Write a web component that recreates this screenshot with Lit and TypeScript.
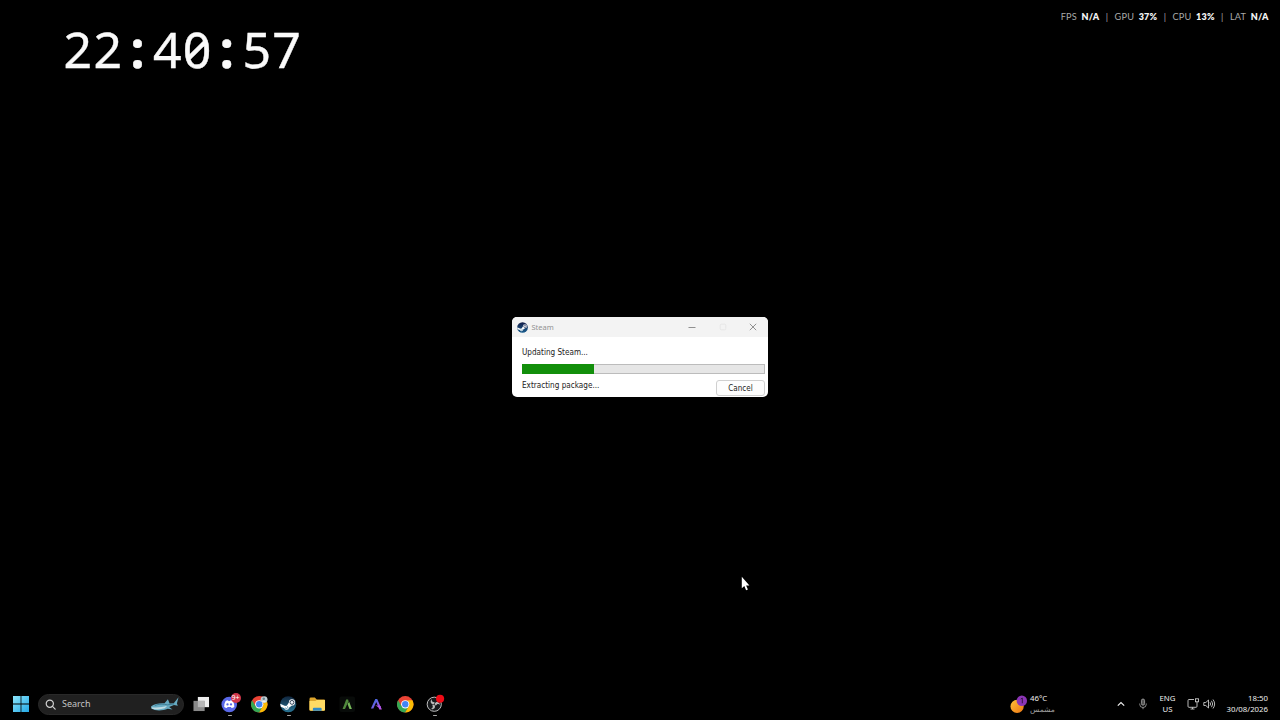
import { LitElement, html, css, svg } from "lit";
import { customElement } from "lit/decorators.js";

const steamMark = (id: string, dark: string, light: string) => html`<svg class="steam" viewBox="0 0 16 16">
  <defs><linearGradient id=${id} x1="0" y1="0" x2="0" y2="1"><stop offset="0" stop-color=${dark}/><stop offset="1" stop-color=${light}/></linearGradient></defs>
  <circle cx="8" cy="8" r="7.8" fill="url(#${id})"/>
  <path d="M.2 7.6 5 9.7c.6-.4 1-.4 1.6-.3l2-3v-.2a3 3 0 1 1 3 3l-2.9 2.1a2.3 2.3 0 0 1-4.5.5L.8 10.4Z" fill="#fff"/>
  <circle cx="11.6" cy="6.2" r="1.9" fill="#eef3f8" stroke=${dark} stroke-width=".8"/>
  <path d="m4.8 11.5 1.4.6a1.2 1.2 0 0 0 .8-2.2" fill="none" stroke=${light} stroke-width=".6"/>
</svg>`;

const chromeShape = svg`
  <circle cx="8" cy="8" r="8" fill="#ea4335"/>
  <path d="M1.07 4A8 8 0 0 0 8 16l3.5-6H8L4.5 10Z" fill="#34a853"/>
  <path d="M14.93 4A8 8 0 0 1 8 16l3.5-6A4 4 0 0 0 8 4Z" fill="#fbbc05"/>
  <circle cx="8" cy="8" r="4" fill="#fff"/><circle cx="8" cy="8" r="3.1" fill="#4285f4"/>`;

@customElement("update-window")
class UpdateWindow extends LitElement {
  static styles = css`
    :host { display: flex; flex-direction: column; box-sizing: border-box; width: 256px; height: 80px; border-radius: 5px; overflow: hidden; background: #fff; color: #222; font: 8.1px/12px "DejaVu Sans Condensed", "DejaVu Sans", sans-serif; }
    .title { display: flex; align-items: center; height: 20px; padding: 0 10px 0 5px; background: #f3f3f3; color: #929292; font: 7.5px/12px "Noto Sans", sans-serif; }
    .steam { width: 11px; height: 11px; margin-right: 3.5px; }
    .name { flex: 1; }
    .controls { display: flex; gap: 20.5px; }
    .controls svg { width: 10px; height: 10px; fill: none; stroke: #858585; stroke-width: .9; }
    .controls .off { stroke: #e5e5e5; }
    .body { display: flex; flex-direction: column; padding: 9px 3px 1px 10px; flex: 1; }
    .track { box-sizing: border-box; height: 10px; margin-top: 6px; border: 1px solid #bcbcbc; background: #e6e6e6; width: 243px; display: flex; }
    .fill { background: #128f0b; margin: -1px 0 -1px -1px; }
    .row { display: flex; justify-content: space-between; }
    .row .status { padding-top: 5px; }
    button { box-sizing: border-box; width: 49px; height: 16px; margin-top: 6px; padding: 1px 0 0; border: 1px solid #d0d0d0; border-radius: 3px; background: #fdfdfd; color: #222; font: 8px/13px "DejaVu Sans Condensed", "DejaVu Sans", sans-serif; }
  `;
  progress = 30;
  render() {
    return html`
      <div class="title">${steamMark("t", "#141d48", "#1b6091")}<span class="name">Steam</span>
        <div class="controls">
          <svg viewBox="0 0 10 10"><path d="M1.5 5.5h7"/></svg>
          <svg class="off" viewBox="0 0 10 10"><rect x="2.2" y="2.2" width="5.6" height="5.6" rx="1"/></svg>
          <svg viewBox="0 0 10 10"><path d="m1.8 1.8 6.4 6.4m0-6.4L1.8 8.2"/></svg>
        </div>
      </div>
      <div class="body">
        <span>Updating Steam...</span>
        <div class="track"><div class="fill" style="width:${this.progress}%"></div></div>
        <div class="row"><span class="status">Extracting package...</span><button>Cancel</button></div>
      </div>`;
  }
}

@customElement("task-bar")
class TaskBar extends LitElement {
  static styles = css`
    :host { display: flex; align-items: center; height: 32px; box-sizing: border-box; padding: 0 12px 0 13px; color: #eee; font: 8.5px/11px "Noto Sans", sans-serif; }
    svg { display: block; overflow: visible; }
    .start { width: 16px; height: 16px; }
    .search { display: flex; align-items: center; box-sizing: border-box; width: 146px; height: 21px; border-radius: 11px; margin: 0 9px 0 9px; padding: 0 4px 0 6px; background: #202020; border: 1px solid #292929; color: #c4c4c4; font: 9px/14px "Noto Sans", sans-serif; }
    .search .glass { width: 11px; height: 11px; margin-right: 6px; }
    .search span { flex: 1; }
    .search .shark { width: 28px; height: 14px; }
    .apps { display: flex; }
    .app { position: relative; display: flex; align-items: center; justify-content: center; width: 29.3px; height: 32px; }
    .app svg { width: 16.5px; height: 16.5px; }
    .app.tasks { width: 16px; margin-right: 6px; }
    .app.on::after { content: ""; position: absolute; bottom: 4px; left: 13px; width: 4px; height: 1.5px; border-radius: 1px; background: #a5a5a5; }
    .badge { position: absolute; left: 15.5px; top: 5px; width: 10px; height: 10px; border-radius: 50%; background: #d2374b; color: #fff; font-size: 7px; line-height: 10px; text-align: center; }
    .space { flex: 1; }
    .weather { display: flex; align-items: center; width: 107.5px; }
    .weather svg { width: 18px; height: 19px; margin-right: 2.5px; }
    .temps { display: flex; flex-direction: column; font-size: 7.8px; }
    .temps .ar { color: #a0a0a0; font-family: "DejaVu Sans", sans-serif; font-size: 7.6px; }
    .tray { display: flex; align-items: center; }
    .up { width: 8px; height: 8px; }
    .mic { width: 8px; height: 12px; margin-left: 14px; }
    .lang { margin-left: 12.5px; text-align: center; font-size: 7.8px; width: 16px; }
    .net { width: 12px; height: 12px; margin-left: 11px; }
    .vol { width: 12px; height: 12px; margin-left: 4px; }
    .clock { margin-left: 11.5px; text-align: right; width: 42px; font-size: 7.8px; white-space: nowrap; }
  `;
  render() {
    return html`
      <svg class="start" viewBox="0 0 16 16"><defs><linearGradient id="w" x2="1" y2="1"><stop stop-color="#8ce5fb"/><stop offset="1" stop-color="#24a9e6"/></linearGradient></defs><path fill="url(#w)" d="M0 0h7.6v7.6H0ZM8.4 0H16v7.6H8.4ZM0 8.4h7.6V16H0ZM8.4 8.4H16V16H8.4Z"/></svg>
      <div class="search">
        <svg class="glass" viewBox="0 0 11 11" fill="none" stroke="#d0d0d0" stroke-width="1.2"><circle cx="4.8" cy="4.7" r="3.6"/><path d="m7.5 7.4 2.7 2.7" stroke-linecap="round"/></svg>
        <span>Search</span>
        <svg class="shark" viewBox="0 0 29 14"><path d="M0 9.5C3 6.8 8 6 14 6.2L17.5 2l1.8 4.4 4.3-.3L28.5 0l-1.7 6.4 1 2.5-4-.8-5 2 3.5 2.5-5-.7c-5 2.3-13 2.5-17-.2Z" fill="#67abc2"/><path d="M.8 10.4c6 .8 11-.2 16-1.5l-2.5 2.6c-5 1.6-10 1.5-13.5.2Z" fill="#c1dce3"/><path d="M4 8.5c4-1.7 9-1.7 13-.6l7-1" fill="none" stroke="#316f87" stroke-width=".8"/></svg>
      </div>
      <div class="apps">
        <div class="app tasks"><svg viewBox="0 0 17 17"><rect x="5" y="1" width="11.5" height="10.5" fill="#eee"/><rect x=".5" y="5" width="11.5" height="10.5" fill="#898989"/><path d="M5 5h7v6.5H5Z" fill="#b6b6b6"/></svg></div>
        <div class="app on"><svg viewBox="0 0 17 17"><circle cx="8.5" cy="8.8" r="8" fill="#5968e8"/><path d="M4.8 5.2q1.3-.8 2.4-.8l.4.7h1.8l.4-.7q1.1 0 2.4.8 1.7 3 1.5 6.1-1.4 1.1-2.8 1.1l-.7-1H6.8l-.7 1q-1.4 0-2.8-1.1-.2-3.1 1.5-6.1Z" fill="#fff"/><circle cx="6.7" cy="8.7" r="1.2" fill="#5968e8"/><circle cx="10.3" cy="8.7" r="1.2" fill="#5968e8"/></svg><span class="badge">9+</span></div>
        <div class="app"><svg viewBox="0 0 16 16">${chromeShape}<circle cx="12.7" cy="3.5" r="3.3" fill="#c0ced3"/><circle cx="12.4" cy="2.7" r="1.2" fill="#66838f"/><path d="M10.4 5.4q2-2 4.3 0-2 1.6-4.3 0" fill="#f1f1ec"/></svg></div>
        <div class="app on">${steamMark("b", "#10253d", "#287494")}</div>
        <div class="app"><svg viewBox="0 0 17 17"><path d="M.5 3q0-1.5 1.5-1.5h4l2 2h7.5q1 0 1 1V15H.5Z" fill="#dda52c"/><path d="M.5 5.2h6l1.5-1h8.5V14q0 1.2-1.2 1.2H1.7Q.5 15.2.5 14Z" fill="#ffdb64"/><path d="M4 15.2v-2q0-1 1-1h7q1 0 1 1v2Z" fill="#328bc5"/></svg></div>
        <div class="app"><svg viewBox="0 0 17 17"><rect x=".5" y=".5" width="16" height="16" rx="2" fill="#080b09"/><path d="M7.4 3.5h2l.4 1.8-3.6 8.2H3.7Z" fill="#508a3d"/><path d="m8.8 8.2 1.7-2.2 2.8 7.5h-2.5Z" fill="#78b85b"/></svg></div>
        <div class="app"><svg viewBox="0 0 17 17"><defs><linearGradient id="a" x2="1" y2="1"><stop offset=".2" stop-color="#4169e3"/><stop offset="1" stop-color="#c652dc"/></linearGradient></defs><path d="M7.5 3h2l4.7 11h-2.5L8.5 6.2l-3 6.6H3Z" fill="url(#a)"/><path d="m7.500 9.600 5.500.8.800 3.200Z" fill="#b354ed"/></svg></div>
        <div class="app"><svg viewBox="0 0 16 16">${chromeShape}</svg></div>
        <div class="app on"><svg viewBox="0 0 17 17"><circle cx="8.5" cy="8.5" r="7.3" fill="#17191b" stroke="#c3c3c3" stroke-width="1"/><g fill="#b9b9b9"><path d="M8 8.5C4.8 8.4 3.700 5.500 6 3c-.4 2.200.6 3.300 3 3.400Z"/><path d="M8 8.500C4.800 8.400 3.700 5.500 6 3c-.4 2.200.6 3.300 3 3.400Z" transform="rotate(120 8.500 8.500)"/><path d="M8 8.500C4.800 8.400 3.700 5.500 6 3c-.4 2.200.6 3.300 3 3.400Z" transform="rotate(240 8.500 8.500)"/></g><circle cx="14.500" cy="2.800" r="4.200" fill="#f00b16"/></svg></div>
      </div>
      <div class="space"></div>
      <div class="weather">
        <svg viewBox="0 0 19 20"><defs><linearGradient id="s" x2="1" y2="1"><stop stop-color="#ffc138"/><stop offset="1" stop-color="#ed7613"/></linearGradient></defs><circle cx="7.5" cy="12" r="7" fill="url(#s)"/><circle cx="12.5" cy="6" r="5.5" fill="#8b35b5"/><path d="m11.3 4.300 1.700-1.100v5.500" fill="none" stroke="#32123f"/></svg>
        <div class="temps"><span>46°C</span><span class="ar">مشمس</span></div>
      </div>
      <div class="tray">
        <svg class="up" viewBox="0 0 8 8"><path d="m.8 5.700 3.200-3.200 3.200 3.200" fill="none" stroke="#eee" stroke-width="1.200"/></svg>
        <svg class="mic" viewBox="0 0 8 12" fill="none" stroke="#aaa" stroke-width=".8"><rect x="2.400" y="1" width="3.200" height="6.200" rx="1.600" fill="#555"/><path d="M.7 5.500v.7a3.300 3.300 0 0 0 6.600 0v-.7M4 9.500v1.700"/></svg>
        <div class="lang">ENG<br>US</div>
        <svg class="net" viewBox="0 0 12 12" fill="none" stroke="#ccc" stroke-width=".9"><path d="M7 1.500H2Q1 1.500 1 2.500v5.800q0 1 1 1h7q1 0 1-1V6M3.500 11h4M5.500 9.300V11"/><rect x="8.500" y=".8" width="3" height="3"/><path d="M10 3.800V6"/></svg>
        <svg class="vol" viewBox="0 0 12 12" fill="none" stroke="#ccc" stroke-width=".9" stroke-linejoin="round"><path d="M.8 4.500h2L5.500 2v8L2.800 7.500h-2ZM7 4.300q1.200 1.700 0 3.400M8.500 2.800q2.400 3.200 0 6.400M10 1.500q3.300 4.500 0 9"/></svg>
        <div class="clock">18:50<br>30/08/2026</div>
      </div>`;
  }
}

const stats: [string, string][] = [["FPS", "N/A"], ["GPU", "37%"], ["CPU", "13%"], ["LAT", "N/A"]];

@customElement("app-root")
class AppRoot extends LitElement {
  static styles = css`
    :host { display: flex; flex-direction: column; position: relative; width: 1280px; height: 720px; overflow: hidden; background: #000; }
    .top { display: flex; justify-content: space-between; align-items: flex-start; flex: 1; padding: 11px 11.5px 0 63px; }
    .time { display: flex; padding-top: 4px; color: #fafafa; font: 400 50px/68px "Noto Sans", sans-serif; font-feature-settings: "zero" 1; -webkit-text-stroke: .4px #fafafa; }
    .time span { width: 29.8px; text-align: center; }
    .time .colon { font-weight: 700; }
    .stats { display: flex; color: #a8a8a8; font: 9.2px/12px Lato, sans-serif; letter-spacing: .2px; }
    .stat { display: flex; gap: 4.5px; }
    .stat b { color: #f3f3f3; font-weight: 800; font-size: 9px; }
    .sep { width: 15.3px; text-align: center; }
    update-window { position: absolute; left: 512px; top: 317px; }
    .cursor { position: absolute; left: 741px; top: 576px; width: 9px; height: 15px; }
  `;
  render() {
    return html`
      <div class="top">
        <div class="time">${[..."22:40:57"].map((c) => html`<span class=${c === ":" ? "colon" : "digit"}>${c}</span>`)}</div>
        <div class="stats">${stats.map(([k, v], i) => html`${i ? html`<span class="sep">|</span>` : ""}<span class="stat"><span>${k}</span><b>${v}</b></span>`)}</div>
      </div>
      <task-bar></task-bar>
      <update-window></update-window>
      <svg class="cursor" viewBox="0 0 9 15"><path d="M.8.8v11.5l2.500-2.200 1.800 4.200 1.800-.8-1.800-4h3.300Z" fill="#fff"/></svg>`;
  }
}
